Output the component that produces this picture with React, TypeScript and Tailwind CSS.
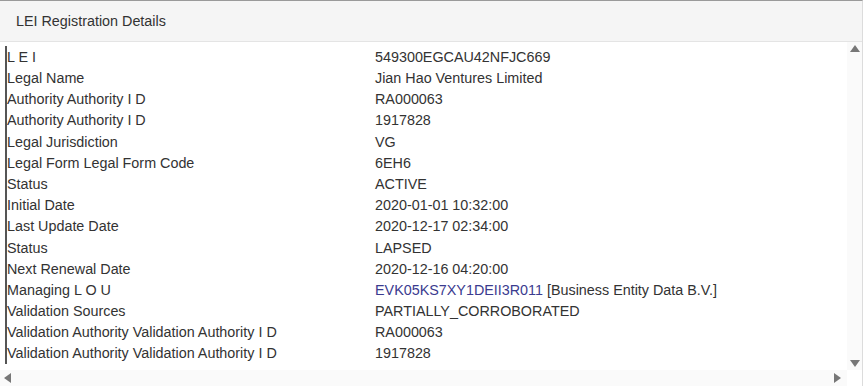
import React from "react";

const rows: [string, React.ReactNode][] = [
  ["L E I", "549300EGCAU42NFJC669"],
  ["Legal Name", "Jian Hao Ventures Limited"],
  ["Authority Authority I D", "RA000063"],
  ["Authority Authority I D", "1917828"],
  ["Legal Jurisdiction", "VG"],
  ["Legal Form Legal Form Code", "6EH6"],
  ["Status", "ACTIVE"],
  ["Initial Date", "2020-01-01 10:32:00"],
  ["Last Update Date", "2020-12-17 02:34:00"],
  ["Status", "LAPSED"],
  ["Next Renewal Date", "2020-12-16 04:20:00"],
  [
    "Managing L O U",
    <>
      <span className="text-[#3b3b8f]">EVK05KS7XY1DEII3R011</span> [Business Entity Data B.V.]
    </>,
  ],
  ["Validation Sources", "PARTIALLY_CORROBORATED"],
  ["Validation Authority Validation Authority I D", "RA000063"],
  ["Validation Authority Validation Authority I D", "1917828"],
];

export default function App() {
  return (
    <div
      className="w-[865px] h-[386px] bg-white overflow-hidden text-[14.35px] text-[#333]"
      style={{ fontFamily: '"Liberation Sans", Arial, sans-serif' }}
    >
      <div className="w-[863px] h-[386px] border-t border-[#9a9a9a] border-r border-r-[#dcdcdc] flex flex-col">
        <div className="h-[41px] shrink-0 bg-[#f5f5f5] border-b border-[#e4e4e4] flex items-center pl-4 pt-[1px]">
          LEI Registration Details
        </div>
        <div className="flex flex-1 min-h-0">
          <div className="flex-1 pt-[4px] pl-[5px]">
            <div className="border-l-2 border-[#555]">
              {rows.map(([k, v], i) => (
                <div key={i} className="flex h-[21.2px] items-center whitespace-nowrap pt-[2px]">
                  <div className="w-[368px]">{k}</div>
                  <div>{v}</div>
                </div>
              ))}
            </div>
          </div>
          <div className="w-[15px] shrink-0 bg-[#fafafa] flex flex-col justify-between items-center pt-[3px] pb-[3px]">
            <div className="w-0 h-0 border-l-[5px] border-r-[5px] border-b-[7px] border-l-transparent border-r-transparent border-b-[#777]" />
            <div className="w-0 h-0 border-l-[5px] border-r-[5px] border-t-[7px] border-l-transparent border-r-transparent border-t-[#777]" />
          </div>
        </div>
        <div className="h-[16px] shrink-0 flex">
          <div className="w-[847px] bg-[#fafafa] flex items-center justify-between pl-[4px] pr-[6px]">
            <div className="w-0 h-0 border-t-[5px] border-b-[5px] border-r-[7px] border-t-transparent border-b-transparent border-r-[#777]" />
            <div className="w-0 h-0 border-t-[5px] border-b-[5px] border-l-[7px] border-t-transparent border-b-transparent border-l-[#777]" />
          </div>
          <div className="flex-1 bg-white" />
        </div>
      </div>
    </div>
  );
}
